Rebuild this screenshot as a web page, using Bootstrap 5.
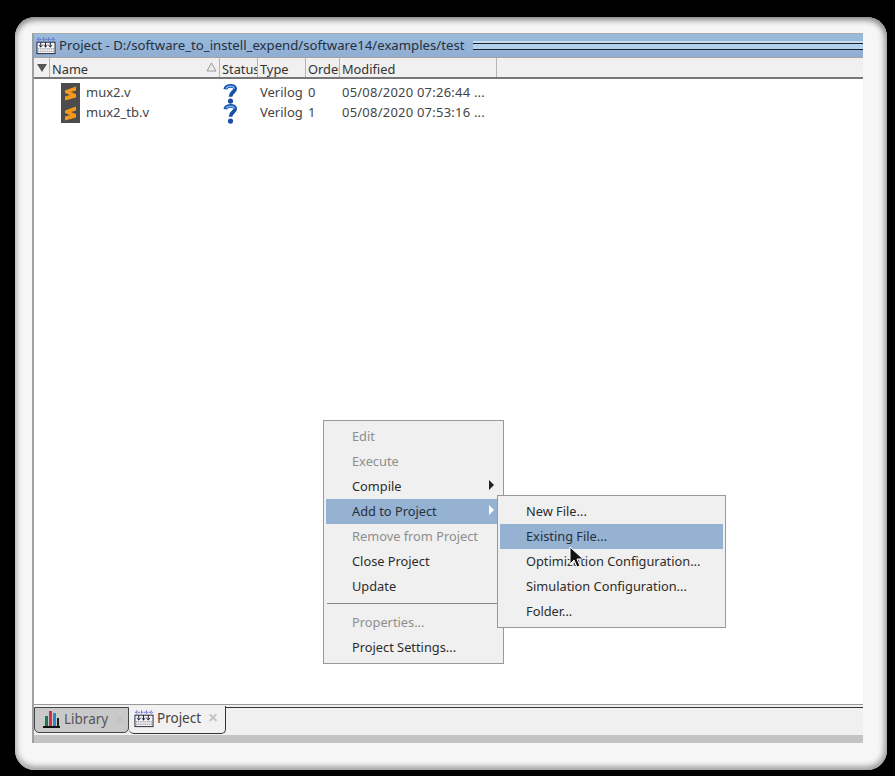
<!DOCTYPE html>
<html lang="en">
<head>
<meta charset="utf-8">
<title>Project</title>
<link href="https://cdn.jsdelivr.net/npm/bootstrap@5.3.0/dist/css/bootstrap.min.css" rel="stylesheet">
<style>
html,body{height:776px;overflow:hidden}
body{background:#000;font-family:"Noto Sans","Open Sans","Liberation Sans",sans-serif;font-size:13px;color:#333;line-height:1.2}
.stage{width:895px;height:776px;padding:17px 8px 6px 15px;position:relative}
.bezel{height:100%;border-radius:20px;background:#f6f6f6;padding:16px 24px 27px 17px;box-shadow:inset 0 6px 6px -3px #858585,inset 4px 0 6px -2px #c0c0c0,inset -6px 0 6px -3px #a8a8a8,inset 0 -6px 6px -3px #8f8f8f}
.pane{height:100%;border-left:2px solid #a0a0a0;border-top:1px solid #aaa}
.titlebar{height:24px;background:linear-gradient(#9abcdd,#90add2);border-bottom:1px solid #a4a4a4;padding-left:2px;gap:3px;flex:none}
.titletext{color:#26303c;white-space:nowrap;width:411px;font-size:13.2px}
.grip{flex:1;height:7px;border-top:1px solid #16202c;border-bottom:1px solid #16202c;background:#b3d0ec;box-shadow:0 -2px 0 #c6dcf0;margin-top:2px}
.heads{height:21px;background:#f0f0f0;border-bottom:2px solid #777;flex:none;font-size:12.8px}
.hcell{border-right:1px solid #b4b4b4;padding:4px 0 0 2px;white-space:nowrap;overflow:hidden;color:#333;height:19px;flex:none}
.hcell.filter{width:16px;padding:6px 0 0 3px}
.hcell.name{width:170px;display:flex;justify-content:space-between;padding-right:2px}
.hcell.status{width:38px}.hcell.type{width:48px}.hcell.order{width:34px}.hcell.mod{width:157px}
.listing{flex:1;background:#fff;padding-top:4px;min-height:0}
.frow{height:20px;color:#444;white-space:nowrap}
.cname{width:186px;padding-left:27px;gap:6px}
.cstat{width:38px;padding-left:3px}
.ctype{width:48px;padding-left:2px}
.cord{width:34px;padding-left:2px}
.cmod{width:157px;padding-left:2px;letter-spacing:.22px}
.tabstrip{height:31px;background:#f0f0f0;border-top:1px solid #9a9a9a;flex:none;padding-top:2px;font-size:13.5px}
.paneltab{height:26px;display:flex;align-items:center;border:1px solid #333;border-radius:0 0 5px 5px;color:#555;gap:3px;flex:none;padding-bottom:2px}
.paneltab.off{width:95px;background:#c9c9c9;border-color:#444;padding-left:7px}
.paneltab.on{width:97px;background:#f1f1f1;color:#444;height:28px;margin-top:-1px;border-top:0;border-left:0;padding-left:5px}
.xmark{color:#c2c2c2;font-weight:700;font-size:12px;margin-left:4px}
.tabrest{flex:1;height:0;border-top:1px solid #333}
.bandrow{height:8px;background:#c4c4c4;flex:none}
.menuA,.menuB{display:block;position:absolute;background:#f0f0f0;border:1px solid #999;border-radius:0;padding:3px 2px;margin:0;min-width:0;font-size:12.8px;box-shadow:none}
.menuA{left:323px;top:420px;width:181px;height:244px}
.menuB{left:497px;top:495px;width:229px;height:133px;z-index:1001}
.menuA .dropdown-item,.menuB .dropdown-item{height:25px;padding:0 0 0 26px;line-height:25px;color:#2c2c2c;position:relative;background:transparent}
.menuA .dropdown-item.disabled,.menuB .dropdown-item.disabled{color:#8e8e8e}
.menuA .dropdown-item.active,.menuB .dropdown-item.active{background:#96b2d2;color:#25303c}
.menuA .dropdown-divider{margin:4px 1px 6px;border-top:1px solid #888;opacity:1}
.arrowr{position:absolute;right:7px;top:6px;width:0;height:0;border-left:5px solid #222;border-top:5px solid transparent;border-bottom:5px solid transparent}
.arrowr.lt{border-left-color:#fff}
.pointer{position:absolute;left:569px;top:546px;z-index:1002}
.qmark{overflow:visible;display:block}
</style>
</head>
<body>
<div class="stage">
  <div class="bezel">
    <div class="pane d-flex flex-column">
      <div class="titlebar d-flex align-items-center">
        <svg width="20" height="18" viewBox="0 0 21 18"><rect x="1" y="5" width="19" height="12" fill="#f4f4f4" stroke="#223"/><path d="M1 2h19M3 0v4M8 0v4M13 0v4M18 0v4" stroke="#5a62c8" stroke-dasharray="2 1"/><path d="M5 5v5M10 5v5M15 5v5M3 8l2 2 2-2M8 8l2 2 2-2M13 8l2 2 2-2" stroke="#113" fill="none"/><path d="M2 12h17M2 14.500h17" stroke="#667" stroke-dasharray="1 1"/></svg>
        <span class="titletext">Project - D:/software_to_instell_expend/software14/examples/test</span>
        <div class="grip"></div>
      </div>
      <div class="heads d-flex">
        <div class="hcell filter"><svg width="10" height="8" viewBox="0 0 10 8" class="d-block"><path d="M0 0h10L5 8z" fill="#555"/></svg></div>
        <div class="hcell name"><span>Name</span><svg width="11" height="10" viewBox="0 0 11 10"><path d="M5.500 1L10 9H1z" fill="#eee" stroke="#999"/></svg></div>
        <div class="hcell status">Status</div>
        <div class="hcell type">Type</div>
        <div class="hcell order">Order</div>
        <div class="hcell mod">Modified</div>
      </div>
      <div class="listing">
        <div class="frow d-flex align-items-center">
          <div class="cname d-flex align-items-center"><svg width="19" height="20" viewBox="0 0 19 20"><rect width="19" height="20" fill="#4c4c4c"/><path d="M4 7.500L15 3.500V7.500L10 9L15 11V14.500L4 17.500V13.500L9 12L4 10Z" fill="#f39a1c"/></svg><span>mux2.v</span></div>
          <div class="cstat"><svg class="qmark" width="15" height="21" viewBox="0 0 16 22"><path d="M2.500 6.500C3 2 13 1.500 13 6 13 9.500 8 9.500 8 14.500" fill="none" stroke="#1a4fa8" stroke-width="4"/><path d="M3 5.500C5 2.500 12 2.500 12 6" fill="none" stroke="#6fb2ee" stroke-width="1.500"/><circle cx="8" cy="19" r="2.800" fill="#1a4fa8"/></svg></div>
          <div class="ctype">Verilog</div>
          <div class="cord">0</div>
          <div class="cmod">05/08/2020 07:26:44 ...</div>
        </div>
        <div class="frow d-flex align-items-center">
          <div class="cname d-flex align-items-center"><svg width="19" height="20" viewBox="0 0 19 20"><rect width="19" height="20" fill="#4c4c4c"/><path d="M4 7.500L15 3.500V7.500L10 9L15 11V14.500L4 17.500V13.500L9 12L4 10Z" fill="#f39a1c"/></svg><span>mux2_tb.v</span></div>
          <div class="cstat"><svg class="qmark" width="15" height="21" viewBox="0 0 16 22"><path d="M2.500 6.500C3 2 13 1.500 13 6 13 9.500 8 9.500 8 14.500" fill="none" stroke="#1a4fa8" stroke-width="4"/><path d="M3 5.500C5 2.500 12 2.500 12 6" fill="none" stroke="#6fb2ee" stroke-width="1.500"/><circle cx="8" cy="19" r="2.800" fill="#1a4fa8"/></svg></div>
          <div class="ctype">Verilog</div>
          <div class="cord">1</div>
          <div class="cmod">05/08/2020 07:53:16 ...</div>
        </div>
      </div>
      <div class="tabstrip d-flex">
        <div class="paneltab off"><svg width="19" height="18" viewBox="0 0 19 18"><path d="M1 17h17" stroke="#111" stroke-width="2"/><path d="M3 16V6h3v10z" fill="#1c7a4a"/><path d="M7 16V1h3v15z" fill="#c8324a"/><path d="M11 16V3h3v13z" fill="#2a8ac0"/><path d="M15 16V8h2v8z" fill="#222"/></svg><span>Library</span><span class="xmark">✕</span></div>
        <div class="paneltab on"><svg width="20" height="18" viewBox="0 0 21 18"><rect x="1" y="5" width="19" height="12" fill="#f4f4f4" stroke="#223"/><path d="M1 2h19M3 0v4M8 0v4M13 0v4M18 0v4" stroke="#5a62c8" stroke-dasharray="2 1"/><path d="M5 5v5M10 5v5M15 5v5M3 8l2 2 2-2M8 8l2 2 2-2M13 8l2 2 2-2" stroke="#113" fill="none"/><path d="M2 12h17M2 14.500h17" stroke="#667" stroke-dasharray="1 1"/></svg><span>Project</span><span class="xmark">✕</span></div>
        <div class="tabrest"></div>
      </div>
      <div class="bandrow"></div>
    </div>
  </div>
  <ul class="dropdown-menu show menuA list-unstyled">
    <li><a class="dropdown-item disabled">Edit</a></li>
    <li><a class="dropdown-item disabled">Execute</a></li>
    <li><a class="dropdown-item">Compile<i class="arrowr"></i></a></li>
    <li><a class="dropdown-item active">Add to Project<i class="arrowr lt"></i></a></li>
    <li><a class="dropdown-item disabled">Remove from Project</a></li>
    <li><a class="dropdown-item">Close Project</a></li>
    <li><a class="dropdown-item">Update</a></li>
    <li><hr class="dropdown-divider"></li>
    <li><a class="dropdown-item disabled">Properties...</a></li>
    <li><a class="dropdown-item">Project Settings...</a></li>
  </ul>
  <ul class="dropdown-menu show menuB list-unstyled">
    <li><a class="dropdown-item">New File...</a></li>
    <li><a class="dropdown-item active">Existing File...</a></li>
    <li><a class="dropdown-item">Optimization Configuration...</a></li>
    <li><a class="dropdown-item">Simulation Configuration...</a></li>
    <li><a class="dropdown-item">Folder...</a></li>
  </ul>
  <svg class="pointer" width="16" height="23" viewBox="0 0 16 23"><path d="M1 1v17l4-4 3 7 3-1-3-7h6z" fill="#111" stroke="#fff" stroke-width="1"/></svg>
</div>
<script src="https://cdn.jsdelivr.net/npm/bootstrap@5.3.0/dist/js/bootstrap.bundle.min.js"></script>
</body>
</html>
